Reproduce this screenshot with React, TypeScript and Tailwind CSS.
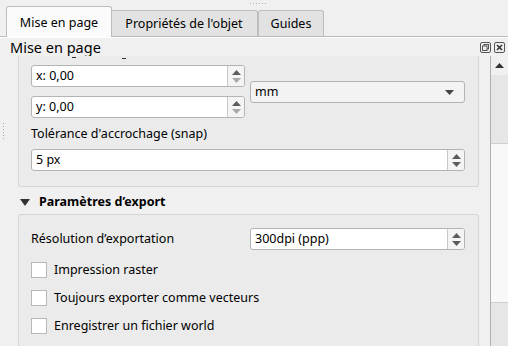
import React from "react";

const FONT = { fontFamily: '"Noto Sans", "Open Sans", sans-serif' };

function SpinArrows({ downDisabled }: { downDisabled?: boolean }) {
  return (
    <div className="flex w-[17px] flex-col items-center justify-center gap-[3px] border-l border-[#c8c8c8] bg-[#f4f4f4]">
      <svg width="9" height="5" viewBox="0 0 9 5">
        <path d="M0 5 L4.5 0 L9 5 Z" fill="#5c5c5c" />
      </svg>
      <svg width="9" height="5" viewBox="0 0 9 5">
        <path d="M0 0 L9 0 L4.5 5 Z" fill={downDisabled ? "#a8a8a8" : "#5c5c5c"} />
      </svg>
    </div>
  );
}

function SpinBox({
  value,
  className,
  downDisabled,
}: {
  value: string;
  className: string;
  downDisabled?: boolean;
}) {
  return (
    <div
      className={`flex h-[22px] overflow-hidden rounded-[3px] border border-[#b4b4b4] bg-white ${className}`}
    >
      <div className="flex flex-1 items-center pl-[4px] pt-[1px] text-[12.5px] text-black">{value}</div>
      <SpinArrows downDisabled={downDisabled} />
    </div>
  );
}

function Checkbox({ label }: { label: string }) {
  return (
    <div className="flex h-[28px] items-center gap-[7px]">
      <div className="h-[16px] w-[16px] border border-[#b8b8b8] bg-white" />
      <span className="text-[12.5px] text-black">{label}</span>
    </div>
  );
}

export default function App() {
  return (
    <div
      className="relative flex h-[346px] w-[508px] flex-col overflow-hidden bg-[#f0f0f0] text-black"
      style={FONT}
    >
      {/* drag handle dots */}
      <div className="absolute left-[250px] top-[3px] flex gap-[2px]">
        {[0, 1, 2, 3, 4, 5].map((i) => (
          <div key={i} className="h-[1px] w-[1px] bg-[#b0b0b0]" />
        ))}
      </div>

      {/* tabs */}
      <div className="flex h-[37px] shrink-0 items-end border-b border-[#bdbdbd] pl-[6px]">
        <div className="z-10 mb-[-1px] flex h-[31px] w-[106px] items-center justify-center rounded-t-[3px] border border-b-0 border-[#bdbdbd] bg-[#fbfbfb] pt-[3px] text-[12.5px]">
          Mise en page
        </div>
        <div className="ml-[-1px] flex h-[26px] w-[147px] items-center justify-center rounded-tr-[3px] border border-b-0 border-l-0 border-[#bdbdbd] bg-[#e2e2e2] pt-[2px] text-[12.5px]">
          Propriétés de l'objet
        </div>
        <div className="flex h-[26px] w-[66px] items-center justify-center rounded-t-[3px] border border-b-0 border-[#bdbdbd] bg-[#e2e2e2] pt-[2px] text-[12.5px]">
          Guides
        </div>
      </div>
      <div className="h-[1px] shrink-0 bg-white" />

      {/* dock title */}
      <div className="flex h-[18px] shrink-0 items-center justify-between pl-[10px] pr-[3px]">
        <span className="text-[14.5px] leading-none">Mise en page</span>
        <div className="flex gap-[3px]">
          <svg width="11" height="11" viewBox="0 0 11 11">
            <rect x="0.5" y="0.5" width="10" height="10" rx="1.5" fill="none" stroke="#555" />
            <rect x="4" y="2.5" width="4.5" height="4.5" fill="none" stroke="#555" />
            <rect x="2.5" y="4" width="4.5" height="4.5" fill="#f0f0f0" stroke="#555" />
          </svg>
          <svg width="11" height="11" viewBox="0 0 11 11">
            <rect x="0.5" y="0.5" width="10" height="10" rx="1.5" fill="none" stroke="#555" />
            <path d="M3 3 L8 8 M8 3 L3 8" stroke="#333" strokeWidth="1.6" />
          </svg>
        </div>
      </div>

      {/* scroll area */}
      <div className="flex flex-1 overflow-hidden">
        <div className="relative flex w-[490px] flex-col">
          {/* splitter dots */}
          <div className="absolute left-[3px] top-[67px] flex flex-col gap-[2px]">
            {[0, 1, 2, 3, 4, 5].map((i) => (
              <div key={i} className="h-[1px] w-[1px] bg-[#a8a8a8]" />
            ))}
          </div>

          {/* group 1 */}
          <div className="ml-[18px] flex h-[131px] w-[461px] shrink-0 flex-col rounded-b-[3px] border border-t-0 border-[#d6d6d6] bg-[#ebebeb] px-[12px]">
            <div className="relative h-[9px]">
              <div className="absolute left-[41px] top-[1px] h-[1px] w-[4px] bg-[#333]" />
              <div className="absolute left-[91px] top-[2px] h-[1px] w-[4px] bg-[#333]" />
            </div>
            <div className="flex gap-[5px]">
              <div className="flex w-[214px] flex-col gap-[9px]">
                <SpinBox value="x: 0,00" className="w-[214px]" downDisabled />
                <SpinBox value="y: 0,00" className="w-[214px]" downDisabled />
              </div>
              <div className="flex flex-1 items-center">
                <div className="flex h-[22px] w-[215px] items-center justify-between rounded-[3px] border border-[#b4b4b4] bg-[#f3f3f3] pl-[4px] pr-[10px] pt-[1px] text-[12.5px]">
                  <span>mm</span>
                  <svg width="9" height="5" viewBox="0 0 9 5">
                    <path d="M0 0 L9 0 L4.5 5 Z" fill="#444" />
                  </svg>
                </div>
              </div>
            </div>
            <div className="flex h-[31px] items-center pt-[1px] text-[12.5px]">Tolérance d'accrochage (snap)</div>
            <SpinBox value="5 px" className="w-[434px]" />
          </div>

          {/* collapsible header */}
          <div className="flex h-[27px] shrink-0 items-center pl-[20px] pt-[3px]">
            <svg width="10" height="7" viewBox="0 0 10 7">
              <path d="M0 0 L10 0 L5 7 Z" fill="#333" />
            </svg>
            <span className="ml-[9px] text-[12.5px] font-bold">Paramètres d’export</span>
          </div>

          {/* group 2 */}
          <div className="ml-[18px] flex w-[461px] flex-1 flex-col rounded-t-[3px] border border-b-0 border-[#d6d6d6] bg-[#ebebeb] px-[12px] pt-[13px]">
            <div className="flex items-center">
              <span className="w-[219px] pt-[1px] text-[12.5px]">Résolution d’exportation</span>
              <SpinBox value="300dpi (ppp)" className="w-[215px]" />
            </div>
            <div className="mt-[6px] flex flex-col">
              <Checkbox label="Impression raster" />
              <Checkbox label="Toujours exporter comme vecteurs" />
              <Checkbox label="Enregistrer un fichier world" />
            </div>
          </div>
        </div>

        {/* scrollbar */}
        <div className="flex w-[18px] flex-col border-l border-[#b0b0b0] bg-[#e6e6e6]">
          <div className="flex h-[19px] items-center justify-center bg-[#f0f0f0]">
            <svg width="9" height="5" viewBox="0 0 9 5">
              <path d="M0 5 L4.5 0 L9 5 Z" fill="#333" />
            </svg>
          </div>
          <div className="h-[68px]" />
          <div className="h-[160px] border-y border-[#d0d0d0] bg-[#f8f8f8]" />
        </div>
      </div>
    </div>
  );
}
